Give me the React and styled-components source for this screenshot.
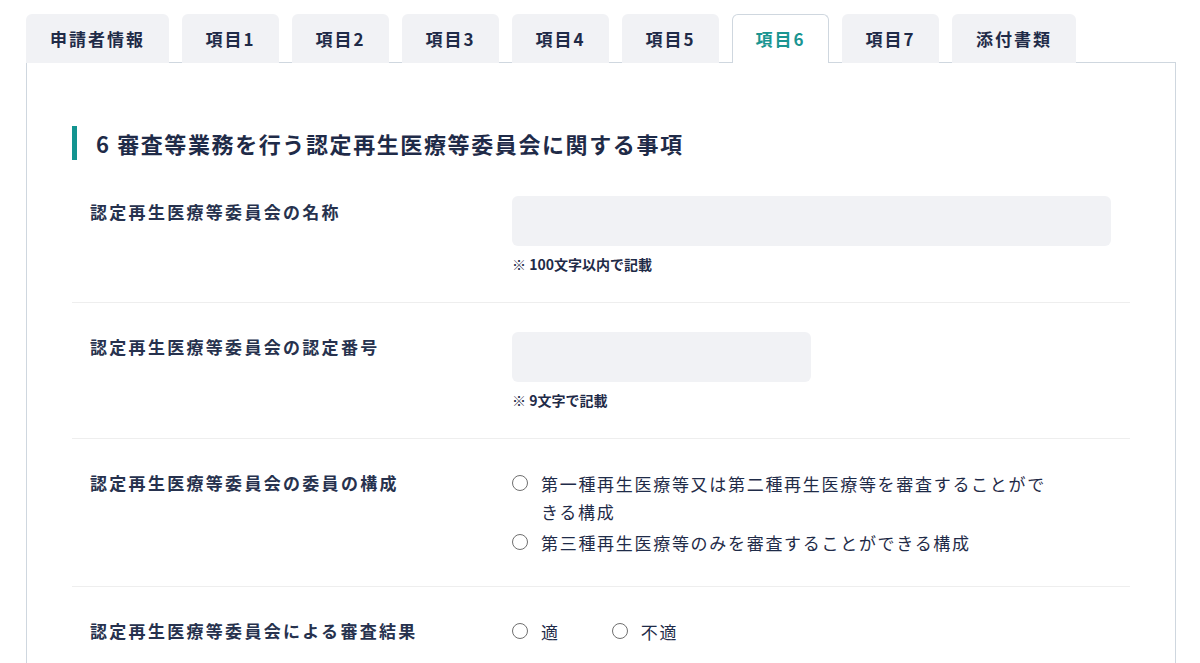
import React from "react";
import styled, { createGlobalStyle } from "styled-components";

const GlobalStyle = createGlobalStyle`
  body {
    margin: 0;
    background: #ffffff;
    font-family: "Noto Sans CJK JP", "Noto Sans", sans-serif;
    color: #1f2b48;
  }
`;

const Page = styled.div`
  padding: 14px 24px 0 26px;
`;

const TabBar = styled.div`
  display: flex;
  gap: 13px;
  position: relative;
  z-index: 1;
  margin-bottom: -1px;
`;

const Tab = styled.div`
  width: ${props => props.width || 97}px;
  height: 49px;
  box-sizing: border-box;
  display: flex;
  align-items: center;
  justify-content: center;
  border-radius: 6px 6px 0 0;
  font-size: 17px;
  font-weight: 700;
  letter-spacing: 2px;
  background: ${props => (props.active ? "#ffffff" : "#f1f2f5")};
  color: ${props => (props.active ? "#1a9591" : "#1f2b48")};
  border: 1px solid ${props => (props.active ? "#cfd7df" : "transparent")};
  border-bottom: none;
  padding-bottom: 1px;
`;

const Panel = styled.div`
  border: 1px solid #cfd7df;
  border-bottom: none;
  padding: 63px 45px 0 45px;
  min-height: 600px;
`;

const Heading = styled.h2`
  margin: 0 0 36px;
  height: 34px;
  display: flex;
  align-items: center;
  border-left: 5px solid #139490;
  padding-left: 19px;
  font-size: 22px;
  font-weight: 700;
  letter-spacing: 1.6px;
  color: #1f2b48;
`;

const Row = styled.div`
  display: grid;
  grid-template-columns: 422px 1fr;
  padding: ${props => props.top ?? 30}px 0 ${props => props.bottom ?? 30}px 18px;
  border-bottom: 1px solid #eeeeee;
`;

const Label = styled.div`
  font-size: 17px;
  font-weight: 700;
  letter-spacing: 2.3px;
  line-height: 30px;
  color: #27324e;
  padding-top: ${props => props.offset || 0}px;
`;

const Field = styled.div`
  display: flex;
  flex-direction: column;
`;

const Input = styled.div`
  width: ${props => props.width}px;
  height: 50px;
  background: #f1f2f5;
  border-radius: 6px;
`;

const Note = styled.div`
  margin-top: 8px;
  font-size: 14px;
  font-weight: 700;
  line-height: 20px;
  color: #1f2b48;
`;

const Options = styled.div`
  display: flex;
  flex-direction: ${props => (props.inline ? "row" : "column")};
  gap: ${props => (props.inline ? "52px" : "3px")};
  padding-top: ${props => props.offset || 0}px;
`;

const Option = styled.label`
  display: flex;
  align-items: flex-start;
  gap: 13px;
  max-width: ${props => props.maxWidth || "none"};
  font-size: 17px;
  letter-spacing: 1.7px;
  line-height: 28px;
  color: #1f2b48;
`;

const Radio = styled.span`
  flex: none;
  width: 16px;
  height: 16px;
  margin-top: 5px;
  border: 1px solid #6f6f6f;
  border-radius: 50%;
  box-sizing: border-box;
  background: #fff;
`;

const tabs = [
  { label: "申請者情報", width: 143 },
  { label: "項目1" },
  { label: "項目2" },
  { label: "項目3" },
  { label: "項目4" },
  { label: "項目5" },
  { label: "項目6", active: true },
  { label: "項目7" },
  { label: "添付書類", width: 124 },
];

function App() {
  return (
    <Page>
      <GlobalStyle />
      <TabBar>
        {tabs.map(tab => (
          <Tab key={tab.label} width={tab.width} active={tab.active}>
            {tab.label}
          </Tab>
        ))}
      </TabBar>
      <Panel>
        <Heading>6 審査等業務を行う認定再生医療等委員会に関する事項</Heading>

        <Row top={0} bottom={28}>
          <Label offset={1}>認定再生医療等委員会の名称</Label>
          <Field>
            <Input width={599} />
            <Note>※ 100文字以内で記載</Note>
          </Field>
        </Row>

        <Row top={29} bottom={28}>
          <Label>認定再生医療等委員会の認定番号</Label>
          <Field>
            <Input width={299} />
            <Note>※ 9文字で記載</Note>
          </Field>
        </Row>

        <Row top={29} bottom={29}>
          <Label>認定再生医療等委員会の委員の構成</Label>
          <Options offset={2}>
            <Option maxWidth="545px">
              <Radio />
              <span>第一種再生医療等又は第二種再生医療等を審査することができる構成</span>
            </Option>
            <Option>
              <Radio />
              <span>第三種再生医療等のみを審査することができる構成</span>
            </Option>
          </Options>
        </Row>

        <Row top={29} bottom={30}>
          <Label>認定再生医療等委員会による審査結果</Label>
          <Options inline offset={2}>
            <Option>
              <Radio />
              <span>適</span>
            </Option>
            <Option>
              <Radio />
              <span>不適</span>
            </Option>
          </Options>
        </Row>
      </Panel>
    </Page>
  );
}

export default App;
